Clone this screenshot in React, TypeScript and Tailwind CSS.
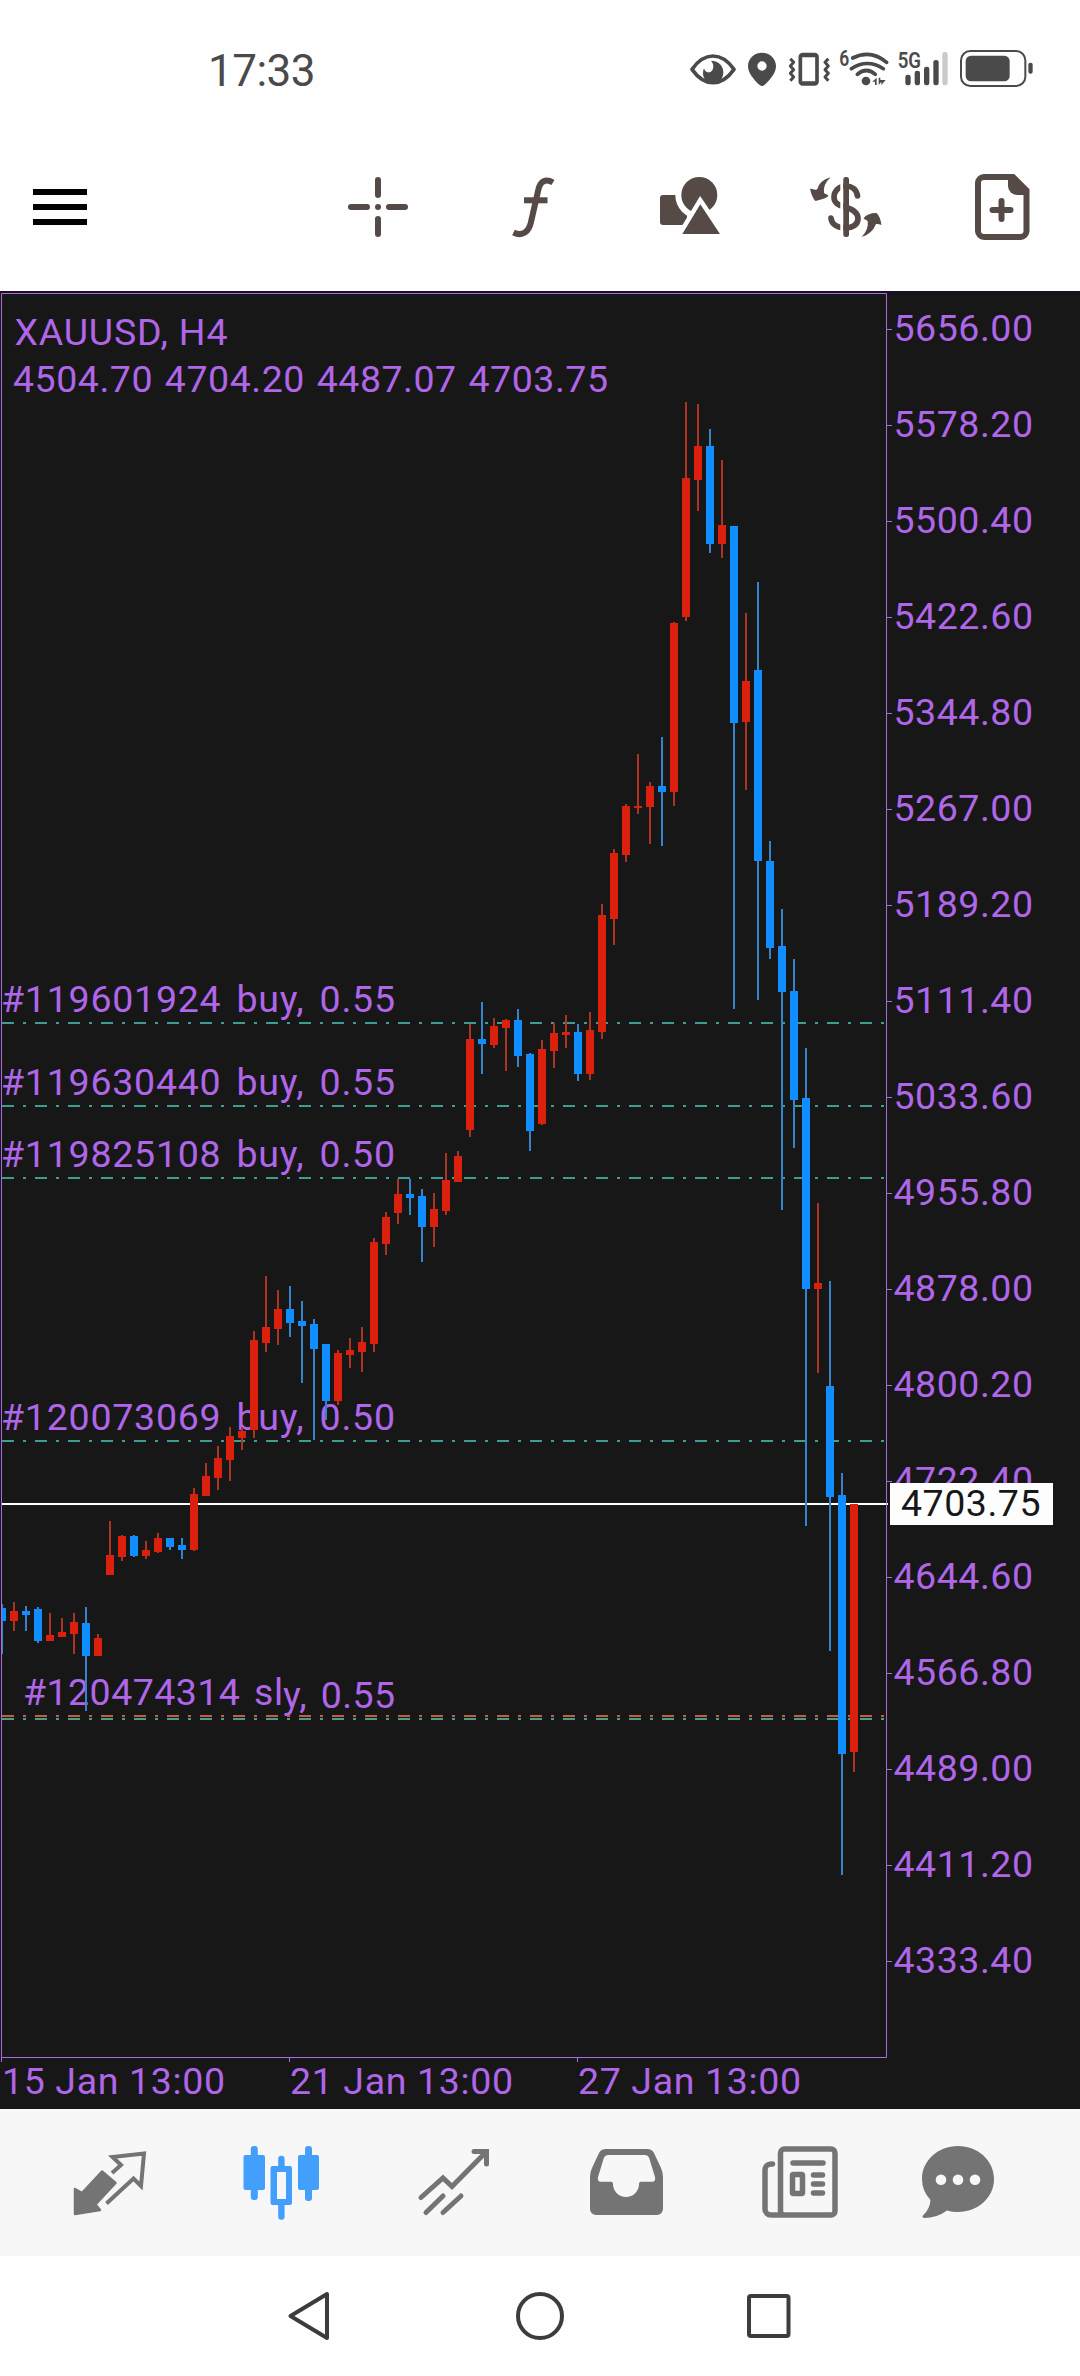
import React from 'react';

type Direction = 'up' | 'down';

// [direction, high, low, body top, body bottom] in chart pixels
type Candle = [Direction, number, number, number, number];

const CHART_TOP = 291;
const CANDLE_STEP = 12;

const candles: Candle[] = [
    ['down', 1604, 1654, 1608, 1621],
    ['up', 1602, 1631, 1611, 1621],
    ['down', 1606, 1631, 1611, 1615],
    ['down', 1607, 1643, 1609, 1641],
    ['up', 1613, 1641, 1635, 1641],
    ['up', 1618, 1637, 1632, 1637],
    ['up', 1613, 1654, 1622, 1634],
    ['down', 1607, 1711, 1623, 1656],
    ['up', 1634, 1656, 1638, 1656],
    ['up', 1521, 1575, 1555, 1575],
    ['up', 1535, 1561, 1536, 1557],
    ['down', 1535, 1557, 1536, 1556],
    ['up', 1541, 1559, 1550, 1556],
    ['up', 1533, 1553, 1538, 1552],
    ['down', 1538, 1550, 1538, 1547],
    ['down', 1538, 1559, 1545, 1550],
    ['up', 1488, 1551, 1494, 1550],
    ['up', 1463, 1496, 1476, 1496],
    ['up', 1446, 1490, 1458, 1478],
    ['up', 1427, 1481, 1436, 1460],
    ['up', 1427, 1450, 1431, 1438],
    ['up', 1331, 1438, 1340, 1430],
    ['up', 1276, 1352, 1327, 1343],
    ['up', 1290, 1345, 1309, 1329],
    ['down', 1286, 1337, 1309, 1323],
    ['down', 1301, 1383, 1321, 1326],
    ['down', 1319, 1440, 1324, 1349],
    ['down', 1344, 1420, 1344, 1401],
    ['up', 1350, 1405, 1353, 1401],
    ['up', 1338, 1368, 1350, 1355],
    ['up', 1327, 1372, 1342, 1352],
    ['up', 1238, 1352, 1242, 1344],
    ['up', 1212, 1255, 1217, 1244],
    ['up', 1179, 1224, 1194, 1213],
    ['down', 1179, 1215, 1194, 1198],
    ['down', 1189, 1262, 1196, 1227],
    ['up', 1193, 1247, 1209, 1227],
    ['up', 1153, 1215, 1180, 1211],
    ['up', 1151, 1182, 1156, 1182],
    ['up', 1024, 1137, 1039, 1130],
    ['down', 1002, 1074, 1039, 1044],
    ['up', 1018, 1048, 1026, 1045],
    ['up', 1019, 1071, 1020, 1028],
    ['down', 1009, 1067, 1020, 1056],
    ['down', 1053, 1151, 1054, 1131],
    ['up', 1040, 1125, 1049, 1124],
    ['up', 1023, 1068, 1033, 1051],
    ['up', 1015, 1048, 1032, 1035],
    ['down', 1024, 1081, 1032, 1074],
    ['up', 1012, 1080, 1030, 1074],
    ['up', 904, 1039, 915, 1032],
    ['up', 849, 945, 853, 919],
    ['up', 804, 862, 806, 855],
    ['up', 754, 814, 806, 808],
    ['up', 782, 844, 786, 807],
    ['down', 737, 846, 786, 792],
    ['up', 622, 806, 623, 792],
    ['up', 402, 621, 478, 617],
    ['up', 404, 511, 446, 480],
    ['down', 429, 553, 446, 544],
    ['up', 460, 558, 525, 544],
    ['down', 526, 1009, 526, 723],
    ['up', 613, 790, 681, 722],
    ['down', 582, 1000, 670, 861],
    ['down', 841, 959, 861, 948],
    ['down', 909, 1210, 946, 992],
    ['down', 959, 1148, 991, 1100],
    ['down', 1048, 1526, 1098, 1289],
    ['up', 1203, 1373, 1283, 1289],
    ['down', 1281, 1651, 1386, 1497],
    ['down', 1473, 1875, 1495, 1754],
    ['up', 1504, 1772, 1504, 1752],
];

const prices = [
    '5656.00', '5578.20', '5500.40', '5422.60', '5344.80', '5267.00',
    '5189.20', '5111.40', '5033.60', '4955.80', '4878.00', '4800.20',
    '4722.40', '4644.60', '4566.80', '4489.00', '4411.20', '4333.40',
];

const dates = [
    { x: 1, label: '15 Jan 13:00' },
    { x: 289, label: '21 Jan 13:00' },
    { x: 577, label: '27 Jan 13:00' },
];

const orders = [
    { y: 1022, label: '#119601924 buy, 0.55' },
    { y: 1105, label: '#119630440 buy, 0.55' },
    { y: 1177, label: '#119825108 buy, 0.50' },
    { y: 1440, label: '#120073069 buy, 0.50' },
];

function Label({ x, y, width, children, fill = '#b066e8', wordSpacing = 0 }: {
    x: number;
    y: number;
    width: number;
    children: string;
    fill?: string;
    wordSpacing?: number;
}) {
    return (
        <text x={x} y={y} textLength={width} fill={fill} fontSize="37.5" wordSpacing={wordSpacing}>
            {children}
        </text>
    );
}

function OrderLine({ y, color }: { y: number; color: string }) {
    return <path d={`M2 ${y + 1}H886`} stroke={color} strokeWidth="2" strokeDasharray="12 9 3 9" />;
}

function StatusBar() {
    return (
        <div className="h-[123px] flex items-start justify-between pl-[208px] pr-[46px] text-[#4a4a4a]">
            <span className="mt-[45px] text-[44px] leading-[52px] tracking-[-0.5px]">17:33</span>
            <div className="mt-[48px] flex items-center gap-2">
                {/* Eye comfort */}
                <svg className="w-12 h-10" viewBox="90 54 144 120" fill="none">
                    <path d="M96 118Q124 78 159 78T222 118Q194 158 159 158T96 118Z" stroke="currentColor" strokeWidth="11" strokeLinejoin="round" />
                    <path d="M153 92C176 92 190 108 190 127C190 147 176 160 159 160C142 160 129 147 129 130C129 124 130 119 132 115C134 124 141 129 149 127C160 124 165 105 153 92Z" fill="currentColor" />
                </svg>
                {/* Location */}
                <svg className="w-8 h-10" viewBox="258 54 96 120" fill="currentColor">
                    <path fillRule="evenodd" d="M306 68C330 68 348 86 348 108C348 130 330 148 316 163Q306 173 296 163C282 148 264 130 264 108C264 86 282 68 306 68ZM306 94a14 14 0 1 0 0 28a14 14 0 1 0 0-28Z" />
                </svg>
                {/* Vibrate */}
                <svg className="w-[46px] h-10" viewBox="378 54 138 120" fill="none" stroke="currentColor">
                    <rect x="421" y="74" width="50" height="88" rx="7" strokeWidth="11" />
                    <path d="M421 77H471M421 159H471" strokeWidth="10" />
                    <path d="M391 86L401 97L391 108L401 119L391 130L401 141L391 152M505 86L495 97L505 108L495 119L505 130L495 141L505 152" strokeWidth="9" strokeLinejoin="round" />
                </svg>
                {/* Wi-Fi */}
                <svg className="w-[50px] h-10 overflow-visible" viewBox="540 54 150 120" fill="none" stroke="currentColor" strokeWidth="11">
                    <path d="M578 84Q632 57 680 97M574 116Q622 85 670 116M592 133Q619 110 646 133" strokeLinecap="round" />
                    <circle cx="618" cy="153" r="13" fill="currentColor" stroke="none" />
                    <path d="M637 155L650 143V165H645V155ZM656 165V143H661V150H677L664 165V155Z" fill="currentColor" stroke="none" />
                    <text x="538" y="108" fontSize="64" fontWeight="600" textLength="30" lengthAdjust="spacingAndGlyphs" fill="currentColor" stroke="none">6</text>
                </svg>
                {/* Mobile signal */}
                <svg className="w-[52px] h-10" viewBox="714 54 156 120" fill="currentColor">
                    <text x="713" y="113" fontSize="66" fontWeight="600" textLength="70" lengthAdjust="spacingAndGlyphs">5G</text>
                    <rect x="736" y="134" width="16" height="32" rx="7" />
                    <rect x="764" y="122" width="16" height="44" rx="7" />
                    <rect x="792" y="110" width="16" height="56" rx="7" />
                    <rect x="820" y="90" width="16" height="76" rx="7" />
                    <rect x="847" y="66" width="16" height="100" rx="7" fill="#cacaca" />
                </svg>
                {/* Battery */}
                <svg className="w-[76px] h-10" viewBox="894 54 228 120" fill="none">
                    <rect x="903" y="63" width="193" height="105" rx="28" stroke="currentColor" strokeWidth="6" />
                    <rect x="917" y="77" width="132" height="77" rx="16" fill="currentColor" />
                    <rect x="1105" y="98" width="13" height="33" rx="6" fill="currentColor" />
                </svg>
            </div>
        </div>
    );
}

function Toolbar() {
    return (
        <div className="h-[168px] flex items-center justify-between pl-[33px] pr-[38px] text-[#554a46]">
            <button className="flex flex-col gap-[9px]">
                <span className="w-[54px] h-1.5 bg-black" />
                <span className="w-[54px] h-1.5 bg-black" />
                <span className="w-[54px] h-1.5 bg-black" />
            </button>
            <div className="flex gap-[76px]">
                {/* Crosshair */}
                <svg className="size-20" viewBox="0 0 80 80" fill="none" stroke="currentColor" strokeWidth="6" strokeLinecap="round">
                    <path d="M40 13V28M40 52V67M13 40H29M51 40H67" />
                    <circle cx="40" cy="40" r="3" fill="currentColor" stroke="none" />
                </svg>
                {/* Indicators */}
                <svg className="size-20" viewBox="0 0 80 80" fill="none" stroke="currentColor" strokeWidth="6">
                    <path d="M59 15.5C51.5 11 46.5 14.5 44.5 22L37 55C35 64.5 28.5 70 19.5 65.5" />
                    <path d="M30 33.3H53.5" />
                </svg>
                {/* Objects */}
                <svg className="size-20" viewBox="0 0 80 80" fill="currentColor">
                    <rect x="10" y="28" width="27" height="30" rx="3" />
                    <circle cx="49.3" cy="28" r="24" fill="white" />
                    <circle cx="49.3" cy="28" r="18" />
                    <path d="M50.3 37.3L70.3 67H32.3Z" fill="white" stroke="white" strokeWidth="9" />
                    <path d="M50.3 37.3L70 67H32.3Z" />
                </svg>
                {/* Trade */}
                <svg className="size-20" viewBox="0 0 80 80" fill="none">
                    <path d="M51.5 29C50.5 21.5 45 19 40 19C33 19 28 24 28 30C28 37 34 38.5 40 40.5C47 42.5 52 45.5 52 51.5C52 58 46 61 40 61C31 61 25.5 57 25 51" stroke="currentColor" strokeWidth="5.7" strokeLinecap="round" />
                    <rect x="34.3" y="10" width="3" height="60" fill="white" />
                    <rect x="37.3" y="10" width="5.7" height="60" rx="2.5" fill="currentColor" />
                    <path d="M4 21.5Q8 23 11 22.5Q14 13 24.7 10.3Q17 17 18 26L22.5 28.5Q22 31 9.5 34Q6 31 4 21.5Z" fill="currentColor" />
                    <path d="M75.5 58Q72 56.5 70 57Q66 67 55.7 70Q63 62 61.7 54L57.5 51.5Q61 46 70.5 46Q74 49 75.5 58Z" fill="currentColor" />
                </svg>
                {/* New order */}
                <svg className="size-20" viewBox="0 0 80 80" fill="none" stroke="currentColor" strokeWidth="6">
                    <path d="M22 10H51L64.5 23.5V64a6 6 0 0 1-6 6H22a6 6 0 0 1-6-6V16a6 6 0 0 1 6-6Z" />
                    <path d="M46 10V19a9 9 0 0 0 9 9H65V23L51 10Z" fill="currentColor" stroke="none" />
                    <path d="M39.5 34V52M30.5 43H48.5" strokeLinecap="round" />
                </svg>
            </div>
        </div>
    );
}

function Chart() {
    return (
        <svg className="block w-[1080px] h-[1818px] bg-[#171717]" viewBox={`0 ${CHART_TOP} 1080 1818`}>
            <rect x="0" y="291" width="1080" height="2" fill="#1b1028" />

            <Label x={14.5} y={345} width={213}>XAUUSD, H4</Label>
            <Label x={13} y={392} width={595} wordSpacing={2}>4504.70 4704.20 4487.07 4703.75</Label>

            {/* Open positions */}
            {orders.map((order) => (
                <g key={order.y}>
                    <Label x={1} y={order.y - 10} width={394} wordSpacing={5}>{order.label}</Label>
                    <OrderLine y={order.y} color="#3f9c93" />
                </g>
            ))}
            <Label x={23} y={1705} width={260} wordSpacing={4}>#120474314 sl</Label>
            <Label x={283} y={1708} width={112} wordSpacing={4}>y, 0.55</Label>
            <OrderLine y={1715} color="#c0603c" />
            <OrderLine y={1718} color="#4d9c8c" />
            <rect x="2" y="1503" width="886" height="2" fill="white" />

            {/* Candles */}
            {candles.map(([direction, high, low, top, bottom], index) => {
                const x = 2 + index * CANDLE_STEP;
                const left = Math.max(x - 4, 2);
                const wickLeft = Math.max(x - 1, 2);
                return (
                    <g key={index}>
                        <rect x={wickLeft} y={high} width={x + 1 - wickLeft} height={low - high} fill={direction === 'up' ? '#ac3425' : '#3683cb'} />
                        <rect x={left} y={top} width={x + 4 - left} height={bottom - top} fill={direction === 'up' ? '#dc200e' : '#108eff'} />
                    </g>
                );
            })}

            {/* Frame */}
            <path d="M1.5 2061V293.5H886.5V2057.5H1.5" fill="none" stroke="#ac6bd8" />

            {/* Price scale */}
            {prices.map((price, index) => {
                const y = 329 + index * 96;
                return (
                    <g key={price}>
                        <path d={`M887 ${y + 0.5}H892`} stroke="#ac6bd8" />
                        <Label x={893.5} y={y + 12} width={139.5}>{price}</Label>
                    </g>
                );
            })}
            <rect x="890" y="1483" width="163" height="42" fill="#fdfdfd" />
            <Label x={901} y={1516} width={139.5} fill="#171717">4703.75</Label>

            {/* Time scale */}
            {dates.map((date) => (
                <g key={date.x}>
                    <path d={`M${date.x + 0.5} 2057V2062`} stroke="#ac6bd8" />
                    <Label x={date.x + 1} y={2094} width={223}>{date.label}</Label>
                </g>
            ))}
        </svg>
    );
}

function TabBar() {
    return (
        <div className="h-[147px] flex items-center gap-[92px] pl-[70px] bg-[#f7f7f7] text-[#747474]">
            {/* Quotes */}
            <svg className="size-20 shrink-0" viewBox="0 0 80 80" fill="none">
                <path d="M5 71V46L12 50L32 28.5L45.5 40L25.5 61.5L30 67Z" fill="currentColor" stroke="currentColor" strokeWidth="2.5" strokeLinejoin="round" />
                <path d="M42 30L51 22L42.5 14L74 10.5L71 43L63.5 35.5L36.5 60.5" stroke="currentColor" strokeWidth="4" />
            </svg>
            {/* Chart */}
            <svg className="size-20 shrink-0 text-[#429ffb]" viewBox="0 0 80 80" fill="currentColor">
                <rect x="1.5" y="12" width="21.5" height="35" rx="2" />
                <rect x="8.8" y="3" width="7" height="54" rx="3" />
                <path fillRule="evenodd" d="M30.5 23H48a2 2 0 0 1 2 2V60a2 2 0 0 1-2 2H30.5a2 2 0 0 1-2-2V25a2 2 0 0 1 2-2ZM35 29V56H44V29Z" />
                <path d="M36.2 24V16a3.2 3.2 0 0 1 6.4 0V24ZM36.2 61V73.5a3.2 3.2 0 0 0 6.4 0V61Z" />
                <rect x="56" y="12" width="21" height="35" rx="2" />
                <rect x="63" y="3" width="7" height="55" rx="3" />
            </svg>
            {/* Trade */}
            <svg className="size-20 shrink-0" viewBox="0 0 80 80" fill="none" stroke="currentColor" strokeWidth="5" strokeLinecap="round">
                <path d="M7 54.5L29 35L38 43.5L72 9M60 8.5H72.5V21M12 69.5L29 53M29 69.5L47 53" />
            </svg>
            {/* History */}
            <svg className="size-20 shrink-0" viewBox="0 0 80 80" fill="currentColor">
                <path fillRule="evenodd" d="M20 6H61Q66 6 68 10L75 25Q77 29 77 34V66a6 6 0 0 1-6 6H10a6 6 0 0 1-6-6V34Q4 29 6 25L13 10Q15 6 20 6ZM22 12Q19 12 18 14.5L12 34Q11 38.7 15 38.7H25Q27 38.7 27 41A13 13 0 0 0 53 41Q53 38.7 55 38.7H66Q70 38.7 69 34L63 14.5Q62 12 59 12Z" />
            </svg>
            {/* News */}
            <svg className="size-20 shrink-0 overflow-visible" viewBox="0 0 80 80" fill="none" stroke="currentColor" strokeWidth="5.5">
                <rect x="22.5" y="6" width="54.5" height="66" rx="4" />
                <path d="M14.5 21H13a6 6 0 0 0-6 6V66a6 6 0 0 0 6 6H24" strokeLinecap="round" />
                <path d="M35 20H65M55.5 32H64.5M55.5 41H64.5M55.5 50H64.5" strokeLinecap="round" />
                <rect x="34.5" y="31.5" width="10" height="19" rx="1" />
            </svg>
            {/* Messages */}
            <svg className="size-20 shrink-0 -ml-3" viewBox="0 0 80 80" fill="currentColor">
                <path d="M40 3C60 3 76 17.5 76 36C76 54.5 60 69 40 69Q34 69 29 67.5Q19 75 6 75Q3.5 74 5 72.5Q12 66 12.5 57Q4 48 4 36C4 17.5 20 3 40 3Z" />
                <g fill="#f7f7f7">
                    <circle cx="23" cy="36.7" r="5.3" />
                    <circle cx="40" cy="36.7" r="5.3" />
                    <circle cx="57" cy="36.7" r="5.3" />
                </g>
            </svg>
        </div>
    );
}

function NavigationBar() {
    return (
        <div className="h-[120px] flex items-center justify-center gap-[180px] text-[#3c3c3c]">
            <svg className="size-[50px]" viewBox="0 0 50 50" fill="none" stroke="currentColor" strokeWidth="4" strokeLinejoin="round">
                <path d="M42 3V47L5.5 25Z" />
            </svg>
            <svg className="size-[50px]" viewBox="0 0 50 50" fill="none" stroke="currentColor" strokeWidth="4">
                <circle cx="25" cy="25" r="22" />
            </svg>
            <svg className="size-[50px]" viewBox="0 0 50 50" fill="none" stroke="currentColor" strokeWidth="4">
                <rect x="4" y="5" width="39.5" height="40" rx="2" />
            </svg>
        </div>
    );
}

export default function App() {
    return (
        <div className="w-[1080px] h-[2376px] flex flex-col bg-[#fefefe] font-['Roboto','Liberation_Sans',sans-serif]">
            <StatusBar />
            <Toolbar />
            <Chart />
            <TabBar />
            <NavigationBar />
        </div>
    );
}
